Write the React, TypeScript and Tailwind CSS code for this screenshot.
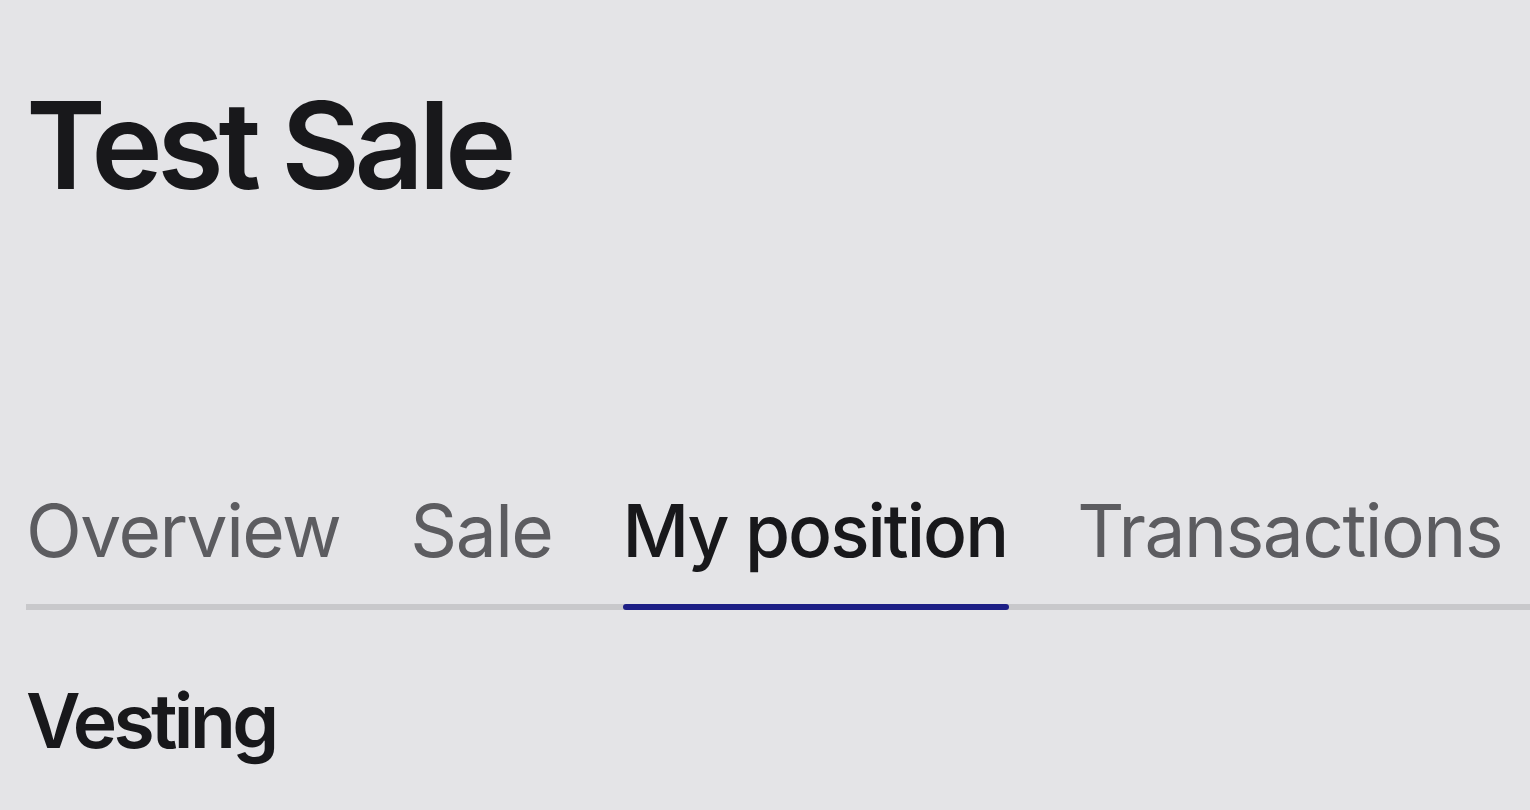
import React from "react";

const tabs = ["Overview", "Sale", "My position", "Transactions"];

export default function App() {
  return (
    <div
      className="w-[1530px] h-[810px] overflow-hidden bg-[#e4e4e7] text-[#18181b]"
      style={{ fontFamily: "Inter, 'Noto Sans', sans-serif" }}
    >
      <div className="pl-[26px] pt-[85px]">
        <h1 className="text-[121px] leading-[120px] font-semibold tracking-[-5.3px]">Test Sale</h1>
        <div className="mt-[282px] flex gap-[70px] border-b-[6px] border-[#c8c8cb] whitespace-nowrap">
          {tabs.map((t) => {
            const active = t === "My position";
            return (
              <div key={t} className="relative">
                <span
                  className={
                    active
                      ? "block text-[73px] leading-[88px] font-medium tracking-[-2px] text-[#18181b] pb-[29px]"
                      : "block text-[73px] leading-[88px] font-normal tracking-[-1.5px] text-[#5c5c60] pb-[29px]"
                  }
                >
                  {t}
                </span>
                {active && (
                  <div className="absolute left-[1px] right-[-2px] bottom-[-6px] h-[6px] rounded-full bg-[#1d1f86]" />
                )}
              </div>
            );
          })}
        </div>
        <h2 className="mt-[66px] text-[75px] leading-[90px] font-semibold tracking-[-3.6px]">Vesting</h2>
      </div>
    </div>
  );
}
